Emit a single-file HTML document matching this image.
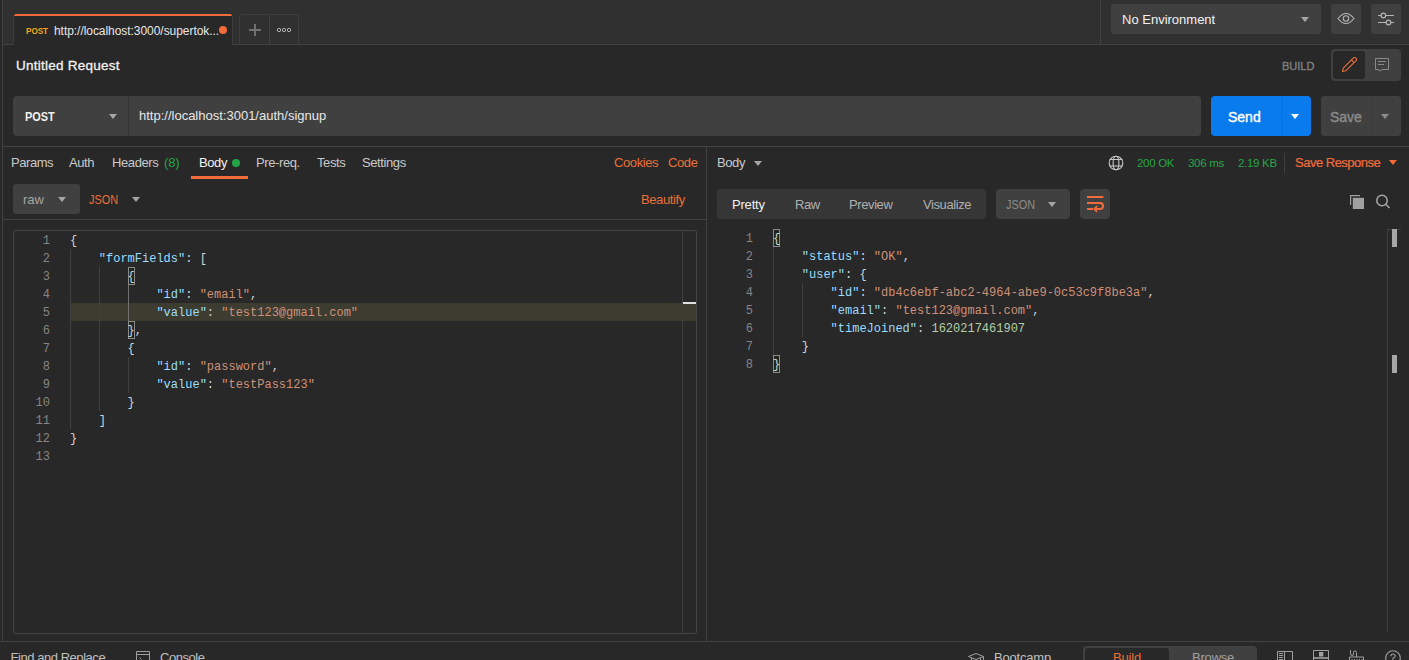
<!DOCTYPE html>
<html><head><meta charset="utf-8">
<style>
*{margin:0;padding:0;box-sizing:border-box}
html,body{width:1409px;height:660px;overflow:hidden;background:#282828;font-family:"Liberation Sans",sans-serif;color:#c0c0c0}
.a{position:absolute}
.t{position:absolute;white-space:nowrap;line-height:1}
.hl{position:absolute;height:1px;background:#424242}
.vl{position:absolute;width:1px;background:#424242}
.mono{font-family:"Liberation Mono",monospace;font-size:12px}
.tri{position:absolute;width:0;height:0;border-left:4px solid transparent;border-right:4px solid transparent;border-top:5px solid #a6a6a6}
.sb{-webkit-text-stroke:0.35px currentColor}
</style></head><body>

<!-- header -->
<div class="a" style="left:3px;top:0;width:1406px;height:44px;background:#303030"></div>
<div class="hl" style="left:2px;top:44px;width:1407px"></div>
<div class="vl" style="left:2px;top:0;height:641px"></div>

<!-- active tab -->
<div class="a" style="left:13px;top:14px;width:220px;height:31px;background:#282828;border-left:1px solid #3d3d3d;border-right:1px solid #3d3d3d;border-radius:3px 3px 0 0;overflow:hidden">
  <div class="a" style="left:0;top:0;width:100%;height:2px;background:#f26b3a"></div>
</div>
<div class="t" style="left:26px;top:27px;font-size:9.2px;font-weight:bold;color:#f2a818;transform:scaleX(0.88);transform-origin:0 0">POST</div>
<div class="t" style="left:54px;top:24.5px;font-size:12px;color:#e6e6e6;letter-spacing:-0.05px">http://localhost:3000/supertok...</div>
<div class="a" style="left:219px;top:26px;width:8px;height:8px;border-radius:50%;background:#f26b3a"></div>

<!-- + ooo group -->
<div class="a" style="left:239px;top:14px;width:60px;height:31px;border:1px solid #3d3d3d;border-bottom:none;border-radius:3px 3px 0 0"></div>
<div class="vl" style="left:269px;top:15px;height:29px"></div>
<div class="a" style="left:249px;top:29px;width:12px;height:2px;background:#707070"></div>
<div class="a" style="left:254px;top:24px;width:2px;height:12px;background:#707070"></div>
<svg class="a" style="left:276px;top:26px" width="16" height="8" viewBox="0 0 16 8"><g fill="none" stroke="#b0b0b0" stroke-width="1"><circle cx="3" cy="4" r="1.7"/><circle cx="8" cy="4" r="1.7"/><circle cx="13" cy="4" r="1.7"/></g></svg>

<!-- right header -->
<div class="vl" style="left:1100px;top:0;height:44px"></div>
<div class="a" style="left:1111px;top:4px;width:210px;height:30px;background:#404040;border-radius:3px"></div>
<div class="t" style="left:1122px;top:13px;font-size:13px;color:#f2f2f2">No Environment</div>
<div class="tri" style="left:1301px;top:17px"></div>
<div class="a" style="left:1331px;top:4px;width:30px;height:30px;background:#404040;border-radius:3px"></div>
<svg class="a" style="left:1331px;top:4px" width="30" height="30" viewBox="0 0 30 30"><g fill="none" stroke="#b4b4b4" stroke-width="1.1"><path d="M7 14.5Q15 4.4 23 14.5Q15 24.6 7 14.5Z"/><circle cx="15" cy="14.5" r="2.7"/></g></svg>
<div class="a" style="left:1371px;top:4px;width:30px;height:30px;background:#404040;border-radius:3px"></div>
<svg class="a" style="left:1371px;top:4px" width="30" height="30" viewBox="0 0 30 30"><g fill="none" stroke="#b4b4b4" stroke-width="1.2"><path d="M7 11.5H10.1M14.7 11.5H23M7 18.5H15.2M19.8 18.5H23"/><circle cx="12.4" cy="11.5" r="2.3"/><circle cx="17.5" cy="18.5" r="2.3"/></g></svg>

<!-- request name row -->
<div class="t sb" style="left:16px;top:58.5px;font-size:13.5px;color:#f2f2f2;-webkit-text-stroke:0.3px #f2f2f2;letter-spacing:0.25px">Untitled Request</div>
<div class="t sb" style="left:1282px;top:61px;font-size:11px;color:#808080">BUILD</div>
<div class="a" style="left:1331px;top:49px;width:70px;height:32px;background:#404040;border-radius:4px"></div>
<div class="a" style="left:1333px;top:51px;width:32px;height:28px;background:#282828;border-radius:3px"></div>
<svg class="a" style="left:1331px;top:49px" width="70" height="32" viewBox="0 0 70 32"><path d="M11.5 22.5L12.28 19.04L22.18 9.14Q23.5 7.8 24.86 9.14Q26.2 10.5 24.86 11.82L14.96 21.72Z M20.41 10.91L23.09 13.59" fill="none" stroke="#e8703a" stroke-width="1.1" stroke-linejoin="round"/><g fill="none" stroke="#8a8a8a" stroke-width="1"><path d="M44.5 9.5H57.5V20.5H51L49 22L47 20.5H44.5Z"/><path d="M47 12.5H55M47 15.5H53"/></g></svg>


<!-- url row -->
<div class="a" style="left:13px;top:96px;width:115px;height:40px;background:#404040;border-radius:4px 0 0 4px"></div>
<div class="t" style="left:24.5px;top:109.5px;font-size:13px;font-weight:bold;color:#f2f2f2;transform:scaleX(0.84);transform-origin:0 0">POST</div>
<div class="tri" style="left:109px;top:114px"></div>
<div class="a" style="left:128px;top:96px;width:1px;height:40px;background:#363636"></div>
<div class="a" style="left:129px;top:96px;width:1072px;height:40px;background:#404040;border-radius:0 4px 4px 0"></div>
<div class="t" style="left:139px;top:109px;font-size:13px;color:#e6e6e6">http://localhost:3001/auth/signup</div>

<div class="a" style="left:1211px;top:96px;width:100px;height:40px;background:#097bed;border-radius:4px"></div>
<div class="a" style="left:1281px;top:96px;width:1px;height:40px;background:#0b6fd4"></div>
<div class="t sb" style="left:1228px;top:110px;font-size:14px;color:#ffffff">Send</div>
<div class="tri" style="left:1291px;top:114px;border-top-color:#fff"></div>
<div class="a" style="left:1321px;top:96px;width:80px;height:40px;background:#404040;border-radius:4px"></div>
<div class="a" style="left:1371px;top:96px;width:1px;height:40px;background:#3a3a3a"></div>
<div class="t sb" style="left:1330px;top:110px;font-size:14px;color:#8c8c8c">Save</div>
<div class="tri" style="left:1381px;top:114px;border-top-color:#8c8c8c"></div>

<div class="hl" style="left:2px;top:146px;width:1407px"></div>
<div class="vl" style="left:706px;top:147px;height:494px"></div>

<!-- request tabs -->
<div class="t" style="left:11px;top:156px;font-size:13px;color:#c8c8c8;letter-spacing:-0.45px">Params</div>
<div class="t" style="left:69px;top:156px;font-size:13px;color:#c8c8c8;letter-spacing:-0.4px">Auth</div>
<div class="t" style="left:112px;top:156px;font-size:13px;color:#c8c8c8;letter-spacing:-0.4px">Headers</div>
<div class="t" style="left:164px;top:156px;font-size:13px;color:#26a546;letter-spacing:-0.2px">(8)</div>
<div class="t" style="left:199px;top:156px;font-size:13px;color:#f2f2f2;letter-spacing:-0.4px">Body</div>
<div class="a" style="left:232px;top:159px;width:8px;height:8px;border-radius:50%;background:#26a546"></div>
<div class="t" style="left:256px;top:156px;font-size:13px;color:#c8c8c8;letter-spacing:-0.4px">Pre-req.</div>
<div class="t" style="left:317px;top:156px;font-size:13px;color:#c8c8c8;letter-spacing:-0.4px">Tests</div>
<div class="t" style="left:362px;top:156px;font-size:13px;color:#c8c8c8;letter-spacing:-0.4px">Settings</div>
<div class="a" style="left:191px;top:176px;width:57px;height:3px;background:#f26b3a"></div>
<div class="t" style="left:614px;top:156px;font-size:13px;color:#e8703a;letter-spacing:-0.4px">Cookies</div>
<div class="t" style="left:668px;top:156px;font-size:13px;color:#e8703a;letter-spacing:-0.4px">Code</div>

<div class="a" style="left:13px;top:184px;width:67px;height:30px;background:#404040;border-radius:3px"></div>
<div class="t" style="left:23px;top:193px;font-size:13px;color:#a6a6a6">raw</div>
<div class="tri" style="left:58px;top:197px"></div>
<div class="t" style="left:89px;top:193px;font-size:13px;color:#e8703a;transform:scaleX(0.84);transform-origin:0 0">JSON</div>
<div class="tri" style="left:132px;top:197px"></div>
<div class="t" style="left:641px;top:193px;font-size:13px;color:#e8703a;letter-spacing:-0.4px">Beautify</div>
<div class="hl" style="left:2px;top:219px;width:704px"></div>

<!-- request editor -->
<div class="a" style="left:13px;top:230px;width:684px;height:404px;border:1px solid #454545;border-radius:2px"></div>
<div class="vl" style="left:682px;top:231px;height:402px;background:#404040"></div>
<div class="a" style="left:70px;top:303px;width:626px;height:18px;background:#3d3c30"></div>
<div class="a" style="left:683px;top:302px;width:13px;height:2px;background:#e0e0e0"></div>
<div id="req"><div class="a mono" style="left:10px;top:232px;width:40px;text-align:right;line-height:18px;color:#858585;white-space:pre">1<br>2<br>3<br>4<br>5<br>6<br>7<br>8<br>9<br>10<br>11<br>12<br>13</div>
<div class="a" style="left:70px;top:249px;width:1px;height:180px;background:#404040"></div>
<div class="a" style="left:99px;top:267px;width:1px;height:144px;background:#404040"></div>
<div class="a" style="left:128px;top:285px;width:1px;height:36px;background:#707070"></div>
<div class="a" style="left:128px;top:357px;width:1px;height:36px;background:#404040"></div>
<div class="a" style="left:128px;top:267px;width:7px;height:18px;border:1px solid #8a8a8a;background:#1e261e"></div>
<div class="a" style="left:128px;top:321px;width:7px;height:18px;border:1px solid #8a8a8a;background:#1e261e"></div>
<div class="a mono" style="left:70px;top:232px;line-height:18px;white-space:pre"><span style="color:#d4d4d4">{</span>
    <span style="color:#9cdcfe">&quot;formFields&quot;</span><span style="color:#d4d4d4">:</span> <span style="color:#d4d4d4">[</span>
        <span style="color:#d4d4d4">{</span>
            <span style="color:#9cdcfe">&quot;id&quot;</span><span style="color:#d4d4d4">:</span> <span style="color:#ce9178">&quot;email&quot;</span><span style="color:#d4d4d4">,</span>
            <span style="color:#9cdcfe">&quot;value&quot;</span><span style="color:#d4d4d4">:</span> <span style="color:#ce9178">&quot;test123@gmail.com&quot;</span>
        <span style="color:#d4d4d4">},</span>
        <span style="color:#d4d4d4">{</span>
            <span style="color:#9cdcfe">&quot;id&quot;</span><span style="color:#d4d4d4">:</span> <span style="color:#ce9178">&quot;password&quot;</span><span style="color:#d4d4d4">,</span>
            <span style="color:#9cdcfe">&quot;value&quot;</span><span style="color:#d4d4d4">:</span> <span style="color:#ce9178">&quot;testPass123&quot;</span>
        <span style="color:#d4d4d4">}</span>
    <span style="color:#d4d4d4">]</span>
<span style="color:#d4d4d4">}</span>
</div></div>

<!-- response header -->
<div class="t" style="left:717px;top:156px;font-size:13px;color:#c8c8c8;letter-spacing:-0.4px">Body</div>
<div class="tri" style="left:754px;top:161px"></div>
<svg class="a" style="left:1108px;top:155px" width="16" height="16" viewBox="0 0 16 16"><g fill="none" stroke="#c8c8c8" stroke-width="1.1"><circle cx="8" cy="8" r="6.8"/><ellipse cx="8" cy="8" rx="2.9" ry="6.8"/><path d="M1.6 4.5H14.4M1.6 11H14.4"/></g></svg>
<div class="t" style="left:1137px;top:157.5px;font-size:11.5px;color:#26a546;letter-spacing:-0.3px">200 OK</div>
<div class="t" style="left:1188px;top:157.5px;font-size:11.5px;color:#26a546;letter-spacing:-0.3px">306 ms</div>
<div class="t" style="left:1238px;top:157.5px;font-size:11.5px;color:#26a546;letter-spacing:-0.3px">2.19 KB</div>
<div class="vl" style="left:1284px;top:153px;height:20px;background:#404040"></div>
<div class="t sb" style="left:1295px;top:156px;font-size:13px;color:#f26b3a;letter-spacing:-0.5px;-webkit-text-stroke:0.2px #f26b3a">Save Response</div>
<div class="tri" style="left:1389px;top:160px;border-top-color:#f26b3a"></div>

<div class="a" style="left:717px;top:189px;width:269px;height:30px;background:#363636;border-radius:4px"></div>
<div class="t" style="left:732px;top:198px;font-size:13px;color:#f2f2f2;letter-spacing:-0.2px">Pretty</div>
<div class="t" style="left:795px;top:198px;font-size:13px;color:#b0b0b0;letter-spacing:-0.4px">Raw</div>
<div class="t" style="left:849px;top:198px;font-size:13px;color:#b0b0b0;letter-spacing:-0.4px">Preview</div>
<div class="t" style="left:923px;top:198px;font-size:13px;color:#b0b0b0;letter-spacing:-0.4px">Visualize</div>
<div class="a" style="left:996px;top:189px;width:74px;height:30px;background:#404040;border-radius:4px"></div>
<div class="t" style="left:1006px;top:198px;font-size:13px;color:#8c8c8c;transform:scaleX(0.84);transform-origin:0 0">JSON</div>
<div class="tri" style="left:1048px;top:202px"></div>
<div class="a" style="left:1080px;top:189px;width:30px;height:30px;background:#404040;border-radius:4px"></div>
<svg class="a" style="left:1085px;top:194px" width="20" height="20" viewBox="0 0 20 20"><g fill="none" stroke="#f26b3a" stroke-width="2"><path d="M2 3H18.3M2 9H15A3 3 0 0 1 15 15H10.5M2 15H8"/><path d="M12 12.2L9.4 15L12 17.8" stroke-width="1.8"/></g></svg>
<svg class="a" style="left:1349px;top:194px" width="16" height="16" viewBox="0 0 16 16"><path d="M1.6 11V1.6H11" fill="none" stroke="#a0a0a0" stroke-width="1.2"/><rect x="3.8" y="3.8" width="11.2" height="11.2" fill="#a0a0a0"/></svg>
<svg class="a" style="left:1374px;top:193px" width="17" height="17" viewBox="0 0 17 17"><g fill="none" stroke="#a6a6a6" stroke-width="1.5"><circle cx="8" cy="7.5" r="5.2"/><path d="M11.8 11.3L15.5 15"/></g></svg>

<!-- response editor -->
<div class="vl" style="left:1387px;top:229px;height:403px;background:#404040"></div>
<div class="hl" style="left:1387px;top:229px;width:14px;background:#404040"></div>
<div class="a" style="left:1392px;top:229px;width:5px;height:18px;background:#a6a6a6"></div>
<div class="a" style="left:1392px;top:355px;width:5px;height:18px;background:#a6a6a6"></div>
<div id="res"><div class="a mono" style="left:713px;top:230px;width:40px;text-align:right;line-height:18px;color:#858585;white-space:pre">1<br>2<br>3<br>4<br>5<br>6<br>7<br>8</div>
<div class="a" style="left:773px;top:247px;width:1px;height:108px;background:#404040"></div>
<div class="a" style="left:802px;top:283px;width:1px;height:54px;background:#404040"></div>
<div class="a" style="left:773px;top:229px;width:7px;height:18px;border:1px solid #8a8a8a;background:#1e261e"></div>
<div class="a" style="left:773px;top:355px;width:7px;height:18px;border:1px solid #8a8a8a;background:#1e261e"></div>
<div class="a mono" style="left:773px;top:230px;line-height:18px;white-space:pre"><span style="color:#d4d4d4">{</span>
    <span style="color:#9cdcfe">&quot;status&quot;</span><span style="color:#d4d4d4">:</span> <span style="color:#ce9178">&quot;OK&quot;</span><span style="color:#d4d4d4">,</span>
    <span style="color:#9cdcfe">&quot;user&quot;</span><span style="color:#d4d4d4">:</span> <span style="color:#d4d4d4">{</span>
        <span style="color:#9cdcfe">&quot;id&quot;</span><span style="color:#d4d4d4">:</span> <span style="color:#ce9178">&quot;db4c6ebf-abc2-4964-abe9-0c53c9f8be3a&quot;</span><span style="color:#d4d4d4">,</span>
        <span style="color:#9cdcfe">&quot;email&quot;</span><span style="color:#d4d4d4">:</span> <span style="color:#ce9178">&quot;test123@gmail.com&quot;</span><span style="color:#d4d4d4">,</span>
        <span style="color:#9cdcfe">&quot;timeJoined&quot;</span><span style="color:#d4d4d4">:</span> <span style="color:#b5cea8">1620217461907</span>
    <span style="color:#d4d4d4">}</span>
<span style="color:#d4d4d4">}</span></div></div>

<!-- footer -->
<div class="hl" style="left:0;top:641px;width:1409px"></div>
<div class="t" style="left:10.5px;top:651px;font-size:13px;color:#c0c0c0;letter-spacing:-0.45px">Find and Replace</div>
<svg class="a" style="left:136px;top:651px" width="15" height="12" viewBox="0 0 15 12"><g fill="none" stroke="#a0a0a0" stroke-width="1"><path d="M0.5 12V0.5H13.5V12M0.5 3.5H13.5M3.5 6.5L5.5 8.5"/></g></svg>
<div class="t" style="left:160px;top:651px;font-size:13px;color:#c0c0c0;letter-spacing:-0.45px">Console</div>
<svg class="a" style="left:968px;top:653px" width="17" height="8" viewBox="0 0 17 8"><g fill="none" stroke="#a0a0a0" stroke-width="1"><path d="M0.5 3.5L8 0.5L15.5 3.5L8 6.5Z M3.5 5V8 M12.5 5V8 M15.5 3.5V8"/></g></svg>
<div class="t" style="left:994px;top:651px;font-size:13px;color:#c0c0c0;letter-spacing:-0.2px">Bootcamp</div>
<div class="a" style="left:1083px;top:646px;width:174px;height:20px;background:#404040;border-radius:4px"></div>
<div class="a" style="left:1085px;top:648px;width:84px;height:20px;background:#282828;border-radius:3px"></div>
<div class="t" style="left:1113px;top:651px;font-size:13px;color:#e8703a;letter-spacing:-0.2px">Build</div>
<div class="t" style="left:1192px;top:651px;font-size:13px;color:#a0a0a0;letter-spacing:-0.2px">Browse</div>
<svg class="a" style="left:1277px;top:651px" width="16" height="10" viewBox="0 0 16 10"><g fill="none" stroke="#a0a0a0" stroke-width="1"><path d="M0.5 10V0.5H15.5V10M7.5 0.5V10M2 2.5H6M2 4.5H6M2 6.5H6M2 8.5H6"/></g></svg>
<svg class="a" style="left:1313px;top:650px" width="16" height="10" viewBox="0 0 16 10"><g fill="none" stroke="#a0a0a0" stroke-width="1"><path d="M0.5 10V0.5H15.5V10"/><path d="M0.5 8H15.5" stroke-width="1.6"/></g><rect x="6" y="2" width="4.3" height="4.5" fill="#a0a0a0"/></svg>
<svg class="a" style="left:1349px;top:650px" width="15" height="10" viewBox="0 0 15 10"><g fill="none" stroke="#a0a0a0" stroke-width="1"><path d="M1.5 0V4Q1.5 5.5 3 5.5Q4.5 5.5 4.5 4V2.5Q4.5 1 6 1Q7.5 1 7.5 2.5V7M0.5 10V7H14.5V10M3 9V10M5.5 9V10M8 9V10M10.5 9V10M13 9V10"/></g></svg>
<svg class="a" style="left:1385px;top:650px" width="16" height="10" viewBox="0 0 16 10"><g fill="none" stroke="#a0a0a0" stroke-width="1.1"><circle cx="8" cy="8" r="7.3"/><path d="M5.8 6.3Q5.8 4 8 4Q10.2 4 10.2 6Q10.2 7.3 8 8.3V10"/></g></svg>

</body></html>
